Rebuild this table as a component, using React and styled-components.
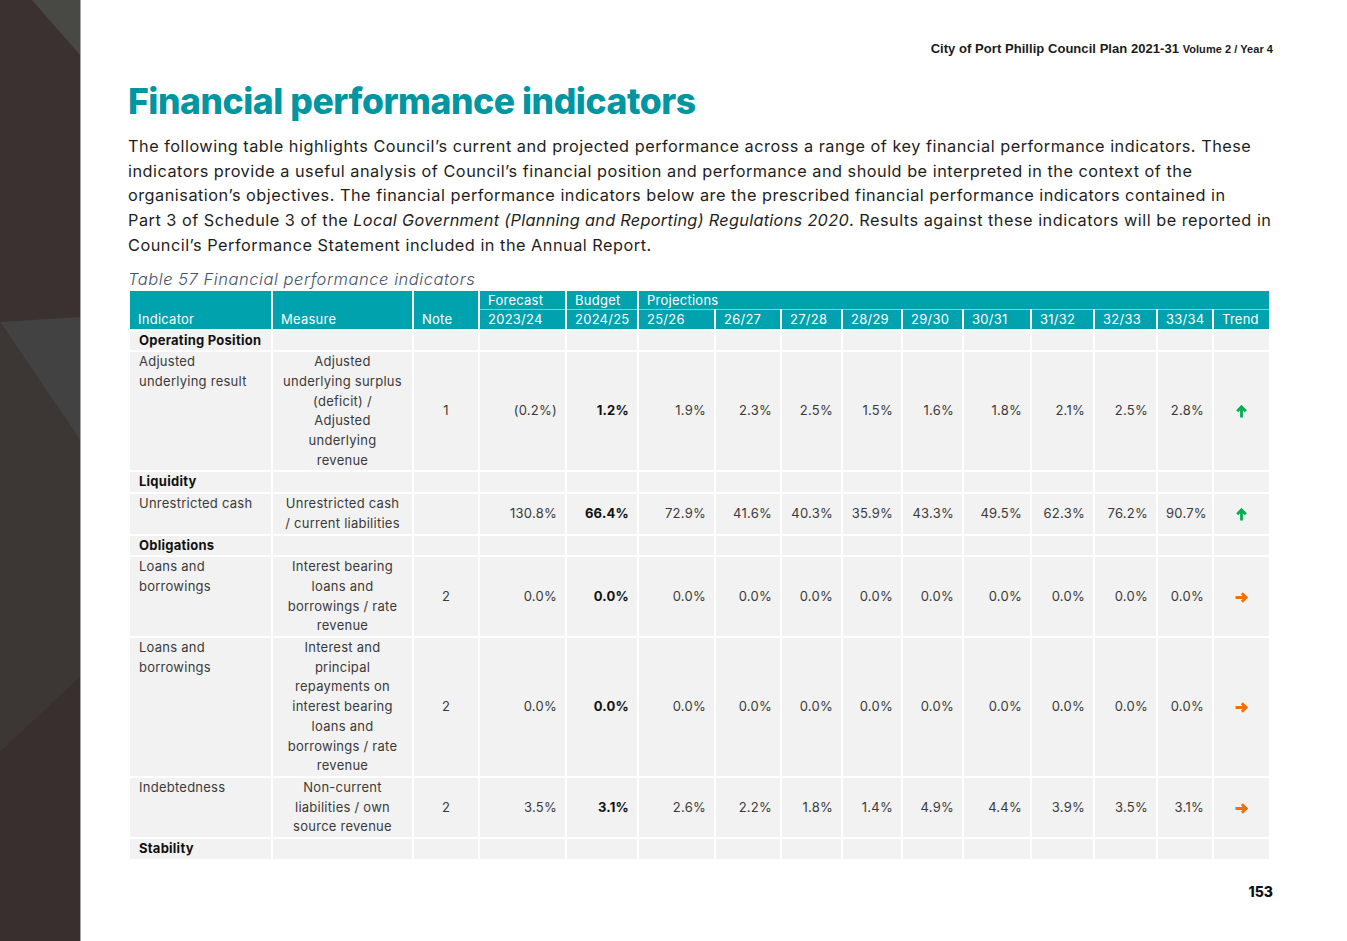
import React from 'react'
import styled, { createGlobalStyle } from 'styled-components'

const GlobalStyle = createGlobalStyle`
  html, body {
    margin: 0;
    padding: 0;
    background: #ffffff;
  }
  body {
    font-family: Inter, "Open Sans", sans-serif;
    color: #222;
  }
`

const Page = styled.div`
  display: flex;
  width: 1347px;
  height: 941px;
  overflow: hidden;
`

const Sidebar = styled.div`
  width: 80px;
  flex-shrink: 0;
  background: #3a3130;
  border-right: 1px solid #a7a7a7;
  svg {
    display: block;
  }
`

const Main = styled.div`
  flex: 1;
  min-width: 0;
  padding: 40px 74px 0 47px;
  display: flex;
  flex-direction: column;
`

const RunningHead = styled.div`
  text-align: right;
  font-family: "Liberation Sans", Arial, sans-serif;
  font-weight: 700;
  font-size: 13px;
  letter-spacing: 0.05px;
  color: #1a1a1a;
  line-height: 17px;
  small {
    font-size: 11px;
  }
`

const Title = styled.h1`
  margin: 21px 0 0;
  font-family: Inter, sans-serif;
  font-weight: 800;
  font-size: 35.5px;
  letter-spacing: -0.45px;
  line-height: 46px;
  color: #0096a1;
`

const Lead = styled.p`
  margin: 9px 0 0;
  font-size: 16.3px;
  line-height: 24.7px;
  color: #1e1e1e;
  white-space: nowrap;
  letter-spacing: 0.5px;
  em {
    font-style: italic;
    letter-spacing: 0.3px;
  }
`

const Caption = styled.div`
  margin-top: 10px;
  font-size: 16.5px;
  font-style: italic;
  font-weight: 300;
  letter-spacing: 0.55px;
  color: #44546a;
  line-height: 22px;
`

const Table = styled.table`
  margin-top: 1px;
  width: 1141px;
  border-collapse: collapse;
  table-layout: fixed;
  font-size: 13px;
  letter-spacing: 0.25px;
  color: #333;
`

const HeadCell = styled.th`
  background: #00a3ad;
  color: #ffffff;
  font-weight: 400;
  text-align: left;
  vertical-align: bottom;
  padding: 0 8px;
  line-height: 18.5px;
  border-left: 2px solid #ffffff;
  border-right: 2px solid #ffffff;
  border-top: ${p => (p.$lower ? '1px solid #7ccfd4' : 'none')};
  border-bottom: ${p => (p.$upper ? '1px solid #7ccfd4' : 'none')};
  white-space: nowrap;
`

const Cell = styled.td`
  background: #f2f2f2;
  border: 2px solid #ffffff;
  padding: 0 ${p => (p.$align === 'left' ? 9 : 8)}px;
  line-height: 19.7px;
  text-align: ${p => p.$align || 'right'};
  vertical-align: ${p => p.$valign || 'middle'};
  font-weight: ${p => (p.$bold ? 700 : 400)};
  color: ${p => (p.$bold ? '#111' : '#3a3a3a')};
  white-space: nowrap;
`

const Footer = styled.div`
  margin-top: 22px;
  text-align: right;
  font-weight: 800;
  font-size: 14px;
  color: #111;
`

const columns = [
  { key: 'ind', w: 143 },
  { key: 'measure', w: 141 },
  { key: 'note', w: 66 },
  { key: 'f', w: 87 },
  { key: 'b', w: 72 },
  { key: 'p1', w: 77 },
  { key: 'p2', w: 66 },
  { key: 'p3', w: 61 },
  { key: 'p4', w: 60 },
  { key: 'p5', w: 61 },
  { key: 'p6', w: 68 },
  { key: 'p7', w: 63 },
  { key: 'p8', w: 63 },
  { key: 'p9', w: 56 },
  { key: 'trend', w: 57 },
]

const years = ['25/26', '26/27', '27/28', '28/29', '29/30', '30/31', '31/32', '32/33', '33/34']
const zeros = Array(11).fill('0.0%')

const sections = [
  {
    heading: 'Operating Position',
    rows: [
      {
        ind: ['Adjusted', 'underlying result'],
        measure: ['Adjusted', 'underlying surplus', '(deficit) /', 'Adjusted', 'underlying', 'revenue'],
        note: '1',
        values: ['(0.2%)', '1.2%', '1.9%', '2.3%', '2.5%', '1.5%', '1.6%', '1.8%', '2.1%', '2.5%', '2.8%'],
        trend: 'up',
      },
    ],
  },
  {
    heading: 'Liquidity',
    rows: [
      {
        ind: ['Unrestricted cash'],
        measure: ['Unrestricted cash', '/ current liabilities'],
        note: '',
        values: ['130.8%', '66.4%', '72.9%', '41.6%', '40.3%', '35.9%', '43.3%', '49.5%', '62.3%', '76.2%', '90.7%'],
        trend: 'up',
      },
    ],
  },
  {
    heading: 'Obligations',
    rows: [
      {
        ind: ['Loans and', 'borrowings'],
        measure: ['Interest bearing', 'loans and', 'borrowings / rate', 'revenue'],
        note: '2',
        values: zeros,
        trend: 'right',
      },
      {
        ind: ['Loans and', 'borrowings'],
        measure: ['Interest and', 'principal', 'repayments on', 'interest bearing', 'loans and', 'borrowings / rate', 'revenue'],
        note: '2',
        values: zeros,
        trend: 'right',
      },
      {
        ind: ['Indebtedness'],
        measure: ['Non-current', 'liabilities / own', 'source revenue'],
        note: '2',
        values: ['3.5%', '3.1%', '2.6%', '2.2%', '1.8%', '1.4%', '4.9%', '4.4%', '3.9%', '3.5%', '3.1%'],
        trend: 'right',
      },
    ],
  },
  { heading: 'Stability', rows: [] },
]

function Lines({ lines }) {
  return lines.map((l, i) => (
    <React.Fragment key={i}>
      {i > 0 && <br />}
      {l}
    </React.Fragment>
  ))
}

function TrendArrow({ dir }) {
  if (dir === 'up') {
    return (
      <svg width="11" height="13" viewBox="0 0 11 13" style={{ verticalAlign: 'middle' }}>
        <path d="M5.5 12.5V2M1.2 6.2L5.5 1.8L9.8 6.2" fill="none" stroke="#00b050" strokeWidth="2.8" />
      </svg>
    )
  }
  return (
    <svg width="13" height="11" viewBox="0 0 13 11" style={{ verticalAlign: 'middle' }}>
      <path d="M0.5 5.5H11M6.8 1.2L11.2 5.5L6.8 9.8" fill="none" stroke="#f07000" strokeWidth="2.8" />
    </svg>
  )
}

function SidebarArt() {
  return (
    <svg width="80" height="941" viewBox="0 0 80 941">
      <rect width="80" height="941" fill="#3a3130" />
      <polygon points="32,0 80,0 80,55" fill="#484845" />
      <polygon points="0,322 80,317 80,440" fill="#424242" />
      <polygon points="0,322 80,440 80,677 0,752" fill="#3c3734" />
      <polygon points="0,752 80,677 80,941 0,941" fill="#3a2f2f" />
    </svg>
  )
}

export default function App() {
  return (
    <>
      <GlobalStyle />
      <Page>
        <Sidebar>
          <SidebarArt />
        </Sidebar>
        <Main>
          <RunningHead>
            City of Port Phillip Council Plan 2021-31 <small>Volume 2 / Year 4</small>
          </RunningHead>
          <Title>Financial performance indicators</Title>
          <Lead>
            The following table highlights Council’s current and projected performance across a range of key financial performance indicators. These
            <br />
            indicators provide a useful analysis of Council’s financial position and performance and should be interpreted in the context of the
            <br />
            organisation’s objectives. The financial performance indicators below are the prescribed financial performance indicators contained in
            <br />
            Part 3 of Schedule 3 of the <em>Local Government (Planning and Reporting) Regulations 2020</em>. Results against these indicators will be reported in
            <br />
            Council’s Performance Statement included in the Annual Report.
          </Lead>
          <Caption>Table 57 Financial performance indicators</Caption>
          <Table>
            <colgroup>
              {columns.map(c => (
                <col key={c.key} style={{ width: c.w }} />
              ))}
            </colgroup>
            <thead>
              <tr>
                <HeadCell rowSpan={2}>Indicator</HeadCell>
                <HeadCell rowSpan={2}>Measure</HeadCell>
                <HeadCell rowSpan={2}>Note</HeadCell>
                <HeadCell $upper>Forecast</HeadCell>
                <HeadCell $upper>Budget</HeadCell>
                <HeadCell $upper colSpan={10}>Projections</HeadCell>
              </tr>
              <tr>
                <HeadCell $lower>2023/24</HeadCell>
                <HeadCell $lower>2024/25</HeadCell>
                {years.map(y => (
                  <HeadCell $lower key={y}>{y}</HeadCell>
                ))}
                <HeadCell $lower>Trend</HeadCell>
              </tr>
            </thead>
            <tbody>
              {sections.map(s => (
                <React.Fragment key={s.heading}>
                  <tr>
                    <Cell $align="left" $bold>{s.heading}</Cell>
                    {columns.slice(1).map(c => (
                      <Cell key={c.key} />
                    ))}
                  </tr>
                  {s.rows.map((r, i) => (
                    <tr key={i}>
                      <Cell $align="left" $valign="top">
                        <Lines lines={r.ind} />
                      </Cell>
                      <Cell $align="center">
                        <Lines lines={r.measure} />
                      </Cell>
                      <Cell $align="center">{r.note}</Cell>
                      {r.values.map((v, j) => (
                        <Cell key={j} $bold={j === 1}>
                          {v}
                        </Cell>
                      ))}
                      <Cell $align="center">
                        <TrendArrow dir={r.trend} />
                      </Cell>
                    </tr>
                  ))}
                </React.Fragment>
              ))}
            </tbody>
          </Table>
          <Footer>153</Footer>
        </Main>
      </Page>
    </>
  )
}
